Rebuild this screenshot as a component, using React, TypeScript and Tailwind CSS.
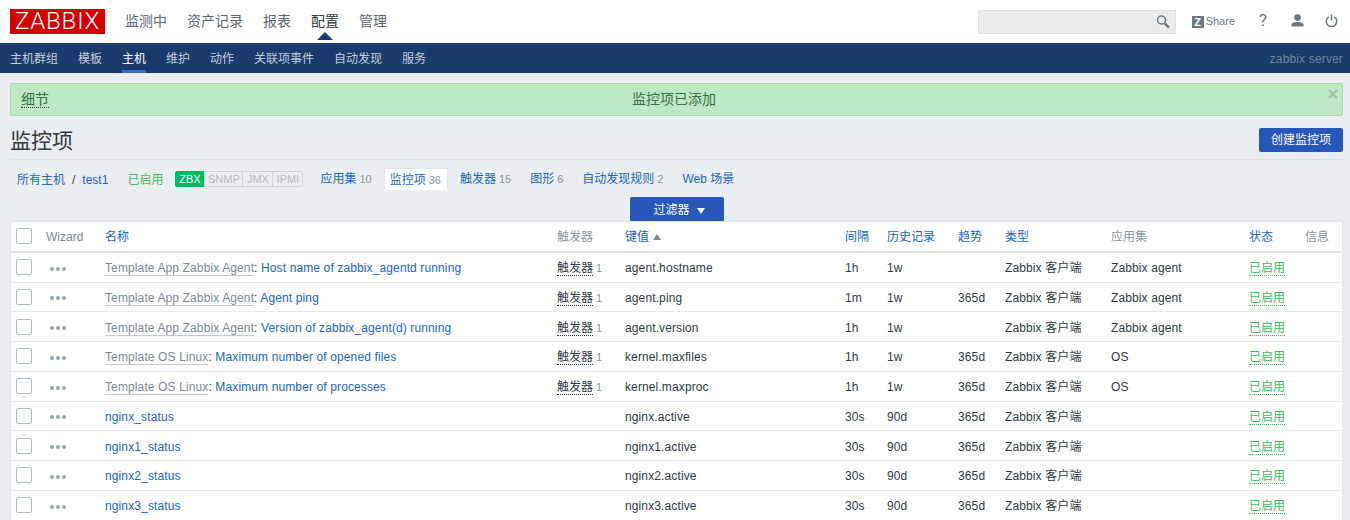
import React from 'react';

const topNav = ['监测中', '资产记录', '报表', '配置', '管理'];
const subNav = ['主机群组', '模板', '主机', '维护', '动作', '关联项事件', '自动发现', '服务'];

const cols = 'grid grid-cols-[35px_59px_452px_68px_220px_42px_71px_47px_106px_138px_56px_37px] items-center';

type Row = {
  tpl?: string;
  name: string;
  trig?: boolean;
  key: string;
  interval: string;
  history: string;
  trend?: string;
  app?: string;
};

const rows: Row[] = [
  { tpl: 'Template App Zabbix Agent', name: 'Host name of zabbix_agentd running', trig: true, key: 'agent.hostname', interval: '1h', history: '1w', app: 'Zabbix agent' },
  { tpl: 'Template App Zabbix Agent', name: 'Agent ping', trig: true, key: 'agent.ping', interval: '1m', history: '1w', trend: '365d', app: 'Zabbix agent' },
  { tpl: 'Template App Zabbix Agent', name: 'Version of zabbix_agent(d) running', trig: true, key: 'agent.version', interval: '1h', history: '1w', app: 'Zabbix agent' },
  { tpl: 'Template OS Linux', name: 'Maximum number of opened files', trig: true, key: 'kernel.maxfiles', interval: '1h', history: '1w', trend: '365d', app: 'OS' },
  { tpl: 'Template OS Linux', name: 'Maximum number of processes', trig: true, key: 'kernel.maxproc', interval: '1h', history: '1w', trend: '365d', app: 'OS' },
  { name: 'nginx_status', key: 'nginx.active', interval: '30s', history: '90d', trend: '365d' },
  { name: 'nginx1_status', key: 'nginx1.active', interval: '30s', history: '90d', trend: '365d' },
  { name: 'nginx2_status', key: 'nginx2.active', interval: '30s', history: '90d', trend: '365d' },
  { name: 'nginx3_status', key: 'nginx3.active', interval: '30s', history: '90d', trend: '365d' },
];

const tabs = [
  { label: '应用集', count: '10', cls: 'mr-3' },
  { label: '监控项', count: '36', cls: 'mr-3 pl-[5px] pr-[6px] bg-white border-x border-t border-[#e3e6e8]' },
  { label: '触发器', count: '15', cls: 'mr-[19px]' },
  { label: '图形', count: '6', cls: 'mr-[19px]' },
  { label: '自动发现规则', count: '2', cls: 'mr-[19px]' },
  { label: 'Web 场景', count: '', cls: '' },
];

const Check = () => <span className="block w-4 h-4 bg-white border border-[#acbbc2] rounded-[2px]" />;

const Dots = () => (
  <span className="flex gap-[2px] pl-1 pt-[1px]">
    <i className="w-1 h-1 rounded-full bg-[#98a4ad]" />
    <i className="w-1 h-1 rounded-full bg-[#98a4ad]" />
    <i className="w-1 h-1 rounded-full bg-[#98a4ad]" />
  </span>
);

export default function App() {
  return (
    <div className="h-[520px] overflow-hidden bg-[#ebeef0] text-[12px] text-[#2f3a42] font-['Liberation_Sans','Noto_Sans_CJK_SC',sans-serif]">
      {/* top bar */}
      <header className="h-[43px] bg-white flex items-center pl-[10px] pr-[12px]">
        <div className="w-[95px] h-[25px] bg-[#d40000] text-white text-[24px] leading-[25px] text-center tracking-[0.8px] font-['Roboto'] font-light">ZABBIX</div>
        <nav className="flex gap-5 ml-5 text-[14px] text-[#5d666d]">
          {topNav.map((t) => (
            <span key={t} className={t === '配置' ? 'relative text-[#2f3a42]' : ''}>
              {t}
              {t === '配置' && (
                <i className="absolute left-[6px] top-[21px] w-0 h-0 border-x-[8px] border-x-transparent border-b-[8px] border-b-[#1b3b6f]" />
              )}
            </span>
          ))}
        </nav>
        <div className="ml-auto flex items-center text-[#6b7880]">
          <div className="w-[198px] h-6 bg-[#ececec] border border-[#dfe1e2] relative">
            <svg className="absolute right-[5px] top-[4px]" width="14" height="14" viewBox="0 0 14 14" fill="none" stroke="#6b7880">
              <circle cx="5.5" cy="5" r="4" strokeWidth="1.5" />
              <path d="M8.6 8.2 13 12.6" strokeWidth="2.4" />
            </svg>
          </div>
          <span className="ml-4 flex items-center">
            <b className="w-3 h-3 bg-[#6b7880] text-white text-[11px] leading-3 text-center">Z</b>
            <span className="ml-[2px] text-[11px]">Share</span>
          </span>
          <span className="ml-6 w-[8px] text-[17px] leading-4 -mt-[3px] font-['Roboto']">?</span>
          <svg className="ml-[24px] -mt-[3px]" width="13" height="13" viewBox="0 0 13 13" fill="#6b7880">
            <circle cx="6.5" cy="3.6" r="3.3" />
            <path d="M0.5 12.5v-1.8C0.5 8.8 3.5 8 6.5 8s6 .8 6 2.7v1.8z" />
          </svg>
          <svg className="ml-[21px] -mt-[3px]" width="13" height="13" viewBox="0 0 14 14" fill="none" stroke="#6b7880" strokeWidth="1.6">
            <path d="M4 3.2a5.6 5.6 0 1 0 6 0" />
            <path d="M7 0.5v6.5" />
          </svg>
        </div>
      </header>

      {/* sub nav */}
      <div className="h-[30px] bg-[#1b3b6f] flex pl-[10px] pr-[7px] text-[#c3ccd9]">
        <div className="flex gap-5">
          {subNav.map((t) => (
            <span key={t} className={t === '主机' ? 'pt-[7px] text-white border-b-[3px] border-[#3a6fc4]' : 'pt-[7px]'}>
              {t}
            </span>
          ))}
        </div>
        <span className="ml-auto pt-[7px] text-[#71839b] tracking-[0.15px]">zabbix server</span>
      </div>

      <main className="pt-[10px] pr-[7px] pl-[10px]">
        {/* message */}
        <div className="relative h-[33px] bg-[#bdeac5] border border-[#a0e0ac] rounded-[2px] flex items-center text-[14px] text-[#3b6e44]">
          <span className="ml-[10px] leading-4 border-b border-dotted border-[#2f3a42]">细节</span>
          <span className="absolute left-[621px] top-[7px] leading-4">监控项已添加</span>
          <svg className="absolute right-[4px] top-[5px]" width="10" height="10" viewBox="0 0 10 10" stroke="#a3bdaa" strokeWidth="2.2">
            <path d="M1 1l8 8M9 1l-8 8" />
          </svg>
        </div>

        {/* title */}
        <div className="mt-[12px] h-[32px] flex justify-between border-b border-[#dfe3e6]">
          <h1 className="text-[21px] leading-[26px] text-[#2f3a42]">监控项</h1>
          <button className="w-[84px] h-6 bg-[#2757b8] text-white rounded-[2px]">创建监控项</button>
        </div>

        {/* breadcrumbs and tabs */}
        <div className="mt-2 h-[22px] flex items-center text-[#2066bd] pl-[7px]">
          <span className="pt-[2px]">所有主机</span>
          <span className="mx-[7px] pt-[2px] text-[#2f3a42]">/</span>
          <span className="pt-[2px]">test1</span>
          <span className="ml-[19px] pt-[2px] text-[#3dbb5a]">已启用</span>
          <span className="ml-3 flex text-[11px] leading-[14px] h-4 text-[#b4bcc1]">
            <span className="w-[29px] bg-[#00b865] text-white text-center rounded-l-[2px] pt-[1px]">ZBX</span>
            <span className="w-[39px] border border-[#cdd3d7] text-center">SNMP</span>
            <span className="w-[30px] border border-l-0 border-[#cdd3d7] text-center">JMX</span>
            <span className="w-[30px] border border-l-0 border-[#cdd3d7] text-center rounded-r-[2px]">IPMI</span>
          </span>
          <span className="ml-[17px] flex">
            {tabs.map((t) => (
              <span key={t.label} className={`h-[22px] leading-[23px] ${t.cls}`}>
                {t.label}
                {t.count && <span className="ml-[3px] text-[11px] text-[#8b969e]">{t.count}</span>}
              </span>
            ))}
          </span>
        </div>

        {/* filter tab */}
        <div className="mt-[7px] flex justify-center">
          <div className="w-[94px] h-6 bg-[#2757b8] text-white rounded-t-[2px] flex items-center justify-center gap-[7px] pl-[5px] pt-[2px]">
            过滤器
            <i className="w-0 h-0 mt-[2px] border-x-[4px] border-x-transparent border-t-[6px] border-t-white" />
          </div>
        </div>

        {/* items table */}
        <div className="bg-white border-x border-t border-[#e3e6e8] leading-[14px]">
          <div className={`${cols} h-[30.75px] pt-[2px] border-b-2 border-[#dfe3e6] text-[#2066bd]`}>
            <span className="pl-[5px] -mt-[2px]"><Check /></span>
            <span className="text-[#7d8991]">Wizard</span>
            <span>名称</span>
            <span className="text-[#8b969e]">触发器</span>
            <span className="flex items-center gap-1">
              键值
              <i className="w-0 h-0 border-x-[4px] border-x-transparent border-b-[6px] border-b-[#7d8991]" />
            </span>
            <span>间隔</span>
            <span>历史记录</span>
            <span>趋势</span>
            <span>类型</span>
            <span className="text-[#8b969e]">应用集</span>
            <span>状态</span>
            <span className="text-[#8b969e]">信息</span>
          </div>
          {rows.map((r) => (
            <div key={r.key} className={`${cols} h-[29.75px] pt-[2px] border-b border-[#e8ebed] tracking-[0.12px]`}>
              <span className="pl-[5px] -mt-[2px]"><Check /></span>
              <Dots />
              <span className="text-[#2066bd]">
                {r.tpl && (
                  <>
                    <span className="text-[#7d8991] border-b border-[#c4cbd0]">{r.tpl}</span>
                    <span className="text-[#2f3a42]">: </span>
                  </>
                )}
                {r.name}
              </span>
              <span>
                {r.trig && (
                  <>
                    <span className="border-b border-dotted border-[#2f3a42] tracking-normal">触发器</span>
                    <span className="ml-[3px] text-[11px] text-[#8b969e]">1</span>
                  </>
                )}
              </span>
              <span>{r.key}</span>
              <span>{r.interval}</span>
              <span>{r.history}</span>
              <span>{r.trend}</span>
              <span>Zabbix 客户端</span>
              <span>{r.app}</span>
              <span><span className="text-[#3dbb5a] border-b border-dotted border-[#3dbb5a] tracking-normal">已启用</span></span>
              <span />
            </div>
          ))}
        </div>
      </main>
    </div>
  );
}
